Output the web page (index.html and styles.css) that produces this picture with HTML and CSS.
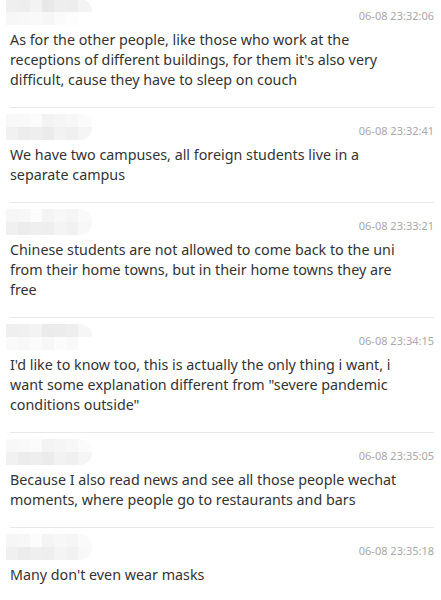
FILE: index.html
```html
<!DOCTYPE html>
<html>
<head>
<meta charset="utf-8">
<link rel="stylesheet" href="styles.css">
</head>
<body>
<div class="list">
  <div class="item">
    <div class="head"><div class="name n1"></div><span class="time">06-08 23:32:06</span></div>
    <p class="text">As for the other people, like those who work at the<br>receptions of different buildings, for them it's also very<br>difficult, cause they have to sleep on couch</p>
  </div>
  <div class="item">
    <div class="head"><div class="name n2"></div><span class="time">06-08 23:32:41</span></div>
    <p class="text">We have two campuses, all foreign students live in a<br>separate campus</p>
  </div>
  <div class="item">
    <div class="head"><div class="name n3"></div><span class="time">06-08 23:33:21</span></div>
    <p class="text">Chinese students are not allowed to come back to the uni<br>from their home towns, but in their home towns they are<br>free</p>
  </div>
  <div class="item">
    <div class="head"><div class="name n4"></div><span class="time">06-08 23:34:15</span></div>
    <p class="text">I'd like to know too, this is actually the only thing i want, i<br>want some explanation different from "severe pandemic<br>conditions outside"</p>
  </div>
  <div class="item">
    <div class="head"><div class="name n2"></div><span class="time">06-08 23:35:05</span></div>
    <p class="text">Because I also read news and see all those people wechat<br>moments, where people go to restaurants and bars</p>
  </div>
  <div class="item">
    <div class="head"><div class="name n3"></div><span class="time">06-08 23:35:18</span></div>
    <p class="text">Many don't even wear masks</p>
  </div>
</div>
</body>
</html>
```
FILE: styles.css
```css
html, body {
  margin: 0;
  padding: 0;
  background: #ffffff;
}
body {
  font-family: "Noto Sans", "Open Sans", sans-serif;
  color: #333333;
  overflow: hidden;
}
.list {
  margin: -7px 7px 0 10px;
}
.item {
  border-bottom: 1px solid #e8e8e8;
  padding-bottom: 17px;
}
.head {
  display: flex;
  justify-content: space-between;
  align-items: flex-start;
  height: 37px;
}
.name {
  margin: 6px 0 0 -4px;
  width: 86px;
  height: 26px;
  filter: blur(0.6px);
  border-radius: 0 12px 12px 0;
}
.n1 {
  background:
    linear-gradient(90deg, #efefef 0 12px, #eeeeee 12px 24px, #f3f3f3 24px 36px, #e8e8e8 36px 48px, #eeeeee 48px 60px, #ededed 60px 72px, #f4f4f4 72px 86px) top / 100% 13px no-repeat,
    linear-gradient(90deg, #f7f7f7 0 12px, #f8f8f8 12px 24px, #f9f9f9 24px 36px, #f6f6f6 36px 48px, #fbfbfb 48px 60px, #fdfdfd 60px 72px, #ffffff 72px 86px) bottom / 100% 13px no-repeat;
}
.n2 {
  background:
    linear-gradient(90deg, #f8f8f8 0 12px, #f9f9f9 12px 24px, #fbfbfb 24px 36px, #f3f3f3 36px 48px, #f5f5f5 48px 60px, #f7f7f7 60px 72px, #fbfbfb 72px 86px) top / 100% 13px no-repeat,
    linear-gradient(90deg, #f1f1f1 0 12px, #ececec 12px 24px, #eeeeee 24px 36px, #ebebeb 36px 48px, #f2f2f2 48px 60px, #efefef 60px 72px, #f5f5f5 72px 86px) bottom / 100% 13px no-repeat;
}
.n3 {
  background:
    linear-gradient(90deg, #f6f6f6 0 12px, #f7f7f7 12px 24px, #fcfcfc 24px 36px, #f4f4f4 36px 48px, #f7f7f7 48px 60px, #f5f5f5 60px 72px, #fafafa 72px 86px) top / 100% 13px no-repeat,
    linear-gradient(90deg, #f0f0f0 0 12px, #ececec 12px 24px, #efefef 24px 36px, #eeeeee 36px 48px, #f4f4f4 48px 60px, #f1f1f1 60px 72px, #f8f8f8 72px 86px) bottom / 100% 13px no-repeat;
}
.n4 {
  background:
    linear-gradient(90deg, #efefef 0 12px, #f0f0f0 12px 24px, #f3f3f3 24px 36px, #ebebeb 36px 48px, #ececec 48px 60px, #eeeeee 60px 72px, #f6f6f6 72px 86px) top / 100% 13px no-repeat,
    linear-gradient(90deg, #fafafa 0 12px, #f8f8f8 12px 24px, #fbfbfb 24px 36px, #f7f7f7 36px 48px, #fcfcfc 48px 60px, #f9f9f9 60px 72px, #ffffff 72px 86px) bottom / 100% 13px no-repeat;
}
.time {
  margin-top: 15px;
  font-size: 11px;
  line-height: 16px;
  color: #a8a8a8;
}
.text {
  margin: 0;
  font-size: 14.3px;
  line-height: 20px;
  white-space: nowrap;
}
```
